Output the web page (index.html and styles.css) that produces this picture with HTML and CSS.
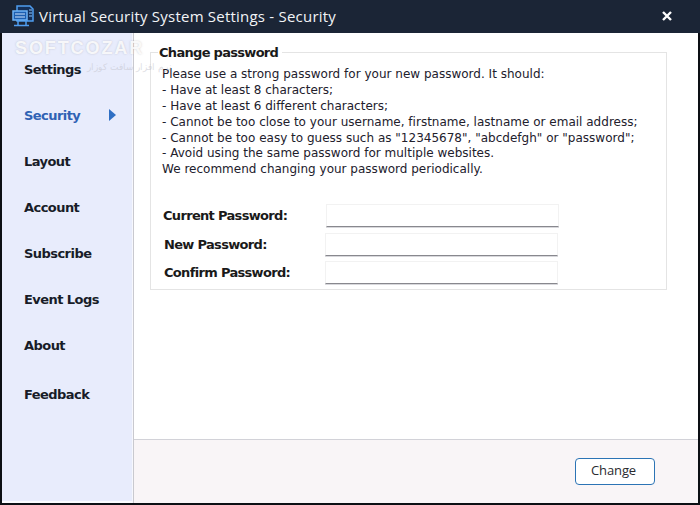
FILE: index.html
```html
<!DOCTYPE html>
<html lang="en">
<head>
<meta charset="utf-8">
<title>Virtual Security System Settings - Security</title>
<link rel="stylesheet" href="styles.css">
</head>
<body>
<div class="window">
  <header class="titlebar">
    <svg class="logo" width="24" height="24" viewBox="0 0 24 24" fill="none" stroke="#4f9df0" stroke-width="1.5">
      <path d="M6 2h13l3 3v12H6z" fill="#14305a"/>
      <path d="M2 7h14v9H2z" fill="#1d5fb0" stroke="#6db4f7"/>
      <path d="M4 10h10M4 13h10" stroke="#cfe6ff" stroke-width="1"/>
      <path d="M18 6h3M18 9h3M18 12h3" stroke="#8cc4fa" stroke-width="1"/>
      <path d="M7 16v5M15 16v5M3 21.5h15" stroke="#4f9df0"/>
    </svg>
    <span class="title">Virtual Security System Settings - Security</span>
    <svg class="close" width="10" height="10" viewBox="0 0 10 10"><path d="M1 1l8 8M9 1l-8 8" stroke="#fff" stroke-width="2.4"/></svg>
  </header>
  <div class="body">
    <nav class="sidebar">
      <a class="item">Settings</a>
      <a class="item active">Security<span class="arrow"></span></a>
      <a class="item">Layout</a>
      <a class="item">Account</a>
      <a class="item">Subscribe</a>
      <a class="item">Event Logs</a>
      <a class="item">About</a>
      <a class="item last">Feedback</a>
    </nav>
    <main class="main">
      <div class="content">
        <fieldset class="group">
          <legend class="legend">Change password</legend>
          <p class="line">Please use a strong password for your new password. It should:</p>
          <p class="line">- Have at least 8 characters;</p>
          <p class="line">- Have at least 6 different characters;</p>
          <p class="line">- Cannot be too close to your username, firstname, lastname or email address;</p>
          <p class="line">- Cannot be too easy to guess such as "12345678", "abcdefgh" or "password";</p>
          <p class="line">- Avoid using the same password for multiple websites.</p>
          <p class="line">We recommend changing your password periodically.</p>
          <div class="form">
            <div class="row first"><label class="label">Current Password:</label><input class="input" type="password"></div>
            <div class="row"><label class="label">New Password:</label><input class="input" type="password"></div>
            <div class="row"><label class="label">Confirm Password:</label><input class="input" type="password"></div>
          </div>
        </fieldset>
      </div>
      <footer class="footer"><button class="button">Change</button></footer>
    </main>
  </div>
  <div class="watermark">SOFTCOZAR<span class="watermark-sub">نرم افزار سافت کوزار</span></div>
</div>
</body>
</html>
```
FILE: styles.css
```css
* { box-sizing: border-box; }
html, body { margin: 0; padding: 0; }
body { width: 700px; height: 505px; overflow: hidden; background: #000; font-family: "DejaVu Sans", sans-serif; }
.window { position: relative; width: 700px; height: 505px; display: flex; flex-direction: column; padding: 0 2px 2px 2px; background: #0c0f14; }
.titlebar { height: 33px; margin: 0 -2px; flex: none; display: flex; align-items: center; padding: 0 28px 2px 11px; background: #1b2536; color: #f2f4f7; }
.logo { flex: none; }
.title { margin-left: 4px; font-family: "Open Sans", sans-serif; font-size: 15px; letter-spacing: 0.22px; }
.close { margin-left: auto; }
.body { flex: 1; display: flex; min-height: 0; }
.sidebar { width: 131px; flex: none; display: flex; flex-direction: column; padding-top: 13px; background: #e8ecfc; border-right: 1px solid #f6f7fd; box-shadow: inset 0 -2px 0 #fafbff; }
.item { height: 46.15px; flex: none; display: flex; align-items: center; padding-left: 22px; font-size: 13px; font-weight: bold; color: #181c28; letter-spacing: -0.55px; }
.item.active { color: #2f62b4; }
.item.last { margin-top: 2px; }
.arrow { width: 0; height: 0; margin-left: 29px; border-left: 7px solid #2f6fc4; border-top: 6.5px solid transparent; border-bottom: 6.5px solid transparent; }
.main { flex: 1; display: flex; flex-direction: column; min-width: 0; background: #fff; border-left: 1px solid #c9c9cf; }
.content { flex: 1; padding: 12px 31px 0 16px; }
.group { margin: 0; padding: 6px 0 4px 11px; height: 245px; border: 1px solid #e4e4e4; }
.legend { margin-left: -4px; padding: 0 4px 0 1px; font-size: 13px; font-weight: bold; color: #1a1a1a; letter-spacing: -0.7px; }
.line { margin: 0; height: 15.9px; line-height: 16px; font-size: 12px; color: #22202c; letter-spacing: 0.01px; white-space: nowrap; }
.form { display: flex; flex-direction: column; gap: 5.5px; margin-top: 27px; }
.row { display: flex; align-items: center; height: 23px; padding-left: 2px; }
.row.first { padding-left: 1px; }
.row.first .label { width: 163px; }
.label { width: 161px; font-size: 13px; font-weight: bold; color: #1a1a1a; letter-spacing: -0.68px; }
.input { width: 233px; height: 23px; border: 1px solid #f2f2f2; border-bottom: 1px solid #88888e; box-shadow: 0 1px 0 #d8d8dc; background: #fff; padding: 0; outline: none; }
.footer { height: 64px; flex: none; display: flex; justify-content: flex-end; align-items: flex-start; padding: 18px 43px 0 0; background: #f9f5f7; border-top: 1px solid #d2d2d8; }
.button { width: 80px; height: 27px; padding: 0 3px 3px 0; background: #fff; border: 1.5px solid #2c74b5; border-radius: 4px; font-family: "Open Sans", sans-serif; font-size: 13px; letter-spacing: -0.1px; color: #2a2a30; }
.watermark { position: absolute; left: 15px; top: 36px; font-family: "Liberation Sans", sans-serif; font-size: 18px; font-weight: bold; letter-spacing: 1.9px; line-height: 25px; color: rgba(255,255,255,0.85); text-shadow: 0 0 2px rgba(120,120,130,0.35); pointer-events: none; }
.watermark-sub { display: block; margin-left: 72px; font-size: 9px; line-height: 12px; font-weight: normal; letter-spacing: 0; color: rgba(190,190,200,0.5); text-shadow: none; }
```
